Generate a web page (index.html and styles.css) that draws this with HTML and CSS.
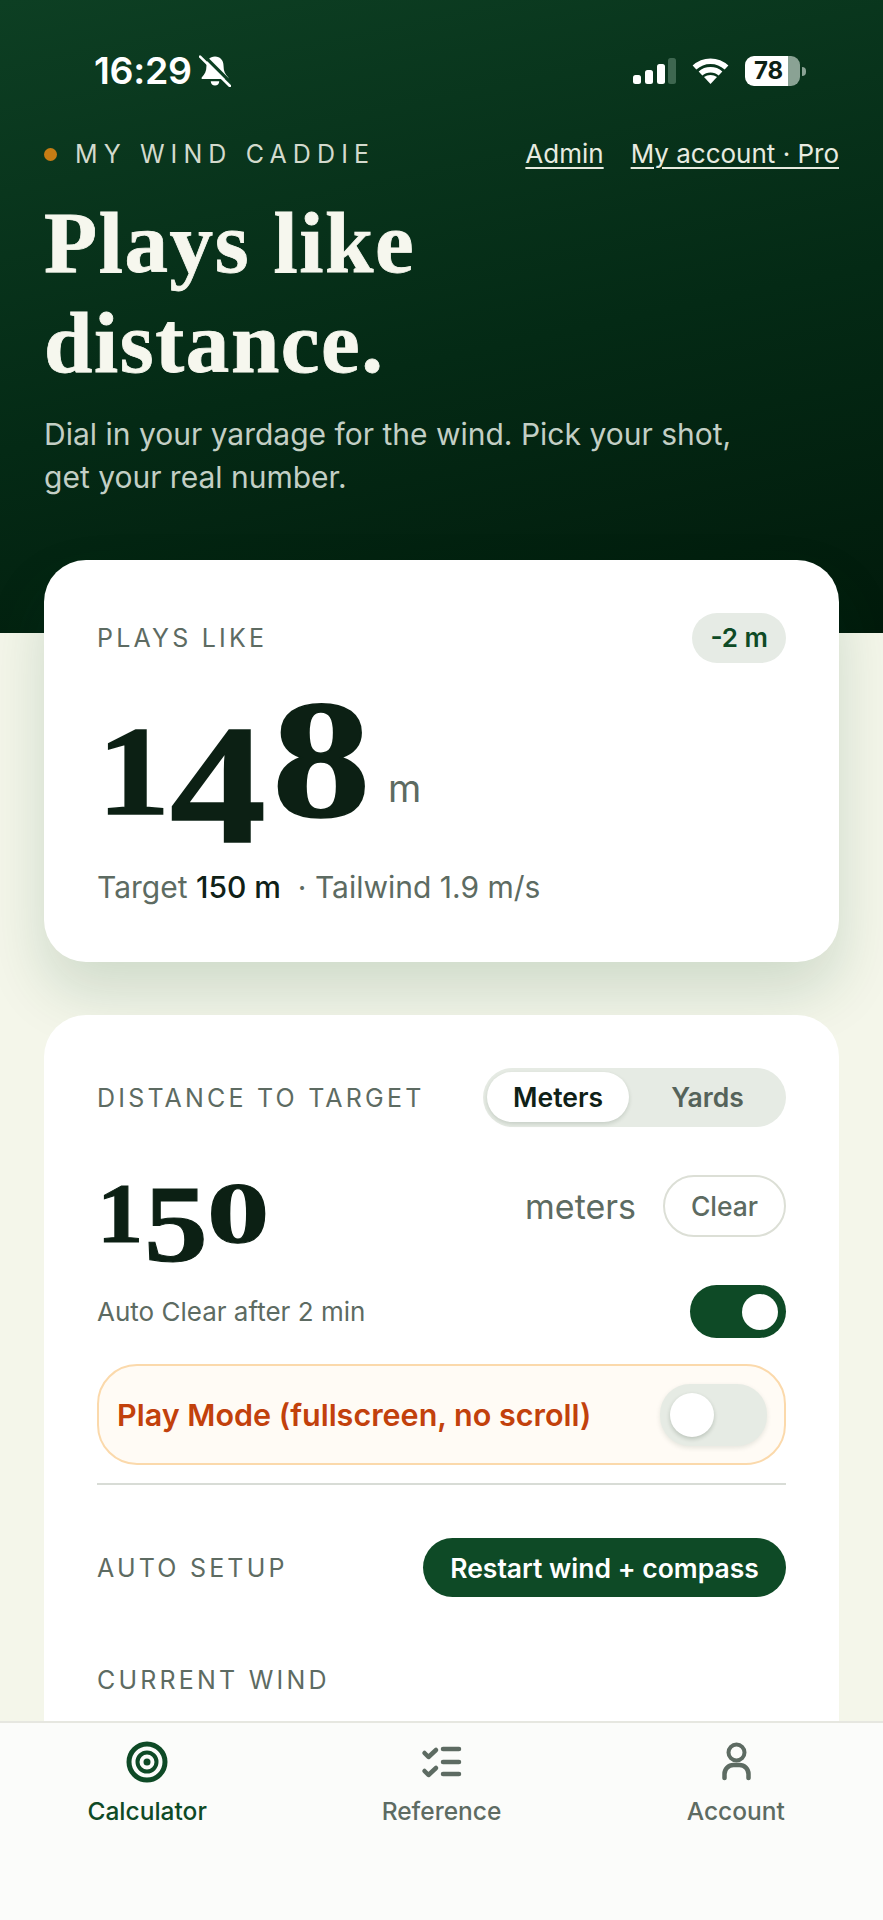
FILE: index.html
```html
<!DOCTYPE html>
<html lang="en">
<head>
<meta charset="utf-8">
<title>My Wind Caddie</title>
<link rel="stylesheet" href="styles.css">
</head>
<body>
<div class="phone">
  <header class="hero">
    <div class="status">
      <div class="status-left">
        <span class="clock">16:29</span>
        <svg class="bell" viewBox="0 0 30 30" width="32" height="32">
          <path class="bell-body" d="M15 1.500c-5 0-8 3.800-8 8.500 0 5-1.500 8-4.500 11v1.500h25V21c-3-3-4.500-6-4.500-11 0-4.700-3-8.500-8-8.500z"/>
          <path class="bell-body" d="M11 24.500h8c0 2.500-1.800 4-4 4s-4-1.500-4-4z"/>
          <path class="bell-cut" d="M3 -1L31 27"/>
          <path class="bell-slash" d="M1 1.500L29 29"/>
        </svg>
      </div>
      <div class="status-right">
        <svg class="signal" viewBox="0 0 43 26" width="43" height="26">
          <rect class="on" x="0" y="17" width="8" height="9" rx="2.500"/>
          <rect class="on" x="12" y="12" width="8" height="14" rx="2.500"/>
          <rect class="on" x="24" y="6" width="8" height="20" rx="2.500"/>
          <rect class="off" x="35" y="0" width="8" height="26" rx="2.500"/>
        </svg>
        <svg class="wifi" viewBox="0 0 36 26" width="37" height="26">
          <path class="wifi-arc" d="M2 9.500C11 1 25 1 34 9.500"/>
          <path class="wifi-arc" d="M8 15.500C13.500 10.500 22.500 10.500 28 15.500"/>
          <path class="wifi-dot" d="M18 26l-6.500-7c3.800-2.800 9.200-2.800 13 0z"/>
        </svg>
        <div class="battery">
          <div class="battery-body"><span class="battery-level">78</span></div>
          <span class="battery-nub"></span>
        </div>
      </div>
    </div>
    <div class="brand-row">
      <div class="brand"><span class="brand-dot"></span><span>MY WIND CADDIE</span></div>
      <nav class="top-links"><a href="#">Admin</a><a href="#">My account · Pro</a></nav>
    </div>
    <h1 class="title">Plays like<br>distance.</h1>
    <p class="lede">Dial in your yardage for the wind. Pick your shot,<br>get your real number.</p>
  </header>

  <main class="content">
    <section class="card card-result">
      <div class="row">
        <span class="label">PLAYS LIKE</span>
        <span class="delta">-2 m</span>
      </div>
      <div class="big-number">
        <span class="fig f-one">1</span><span class="fig f-four">4</span><span class="fig f-eight">8</span><span class="big-unit">m</span>
      </div>
      <p class="summary">Target <strong>150 m</strong>&nbsp; · Tailwind 1.9 m/s</p>
    </section>

    <section class="card card-input">
      <div class="row row-first">
        <span class="label">DISTANCE TO TARGET</span>
        <div class="segment">
          <span class="segment-item is-active">Meters</span>
          <span class="segment-item">Yards</span>
        </div>
      </div>
      <div class="row row-value">
        <div class="input-number"><span class="fig i-one">1</span><span class="fig i-five">5</span><span class="fig i-zero">0</span></div>
        <div class="value-side">
          <span class="unit-word">meters</span>
          <button class="clear-btn">Clear</button>
        </div>
      </div>
      <div class="row row-auto">
        <span class="auto-text">Auto Clear after 2 min</span>
        <span class="switch switch-on"><span class="knob"></span></span>
      </div>
      <div class="play-mode">
        <span class="play-text">Play Mode (fullscreen, no scroll)</span>
        <span class="switch switch-off"><span class="knob"></span></span>
      </div>
      <hr class="rule">
      <div class="row row-setup">
        <span class="label">AUTO SETUP</span>
        <button class="primary-btn">Restart wind + compass</button>
      </div>
      <div class="wind-label"><span class="label">CURRENT WIND</span></div>
    </section>
  </main>

  <nav class="tabbar">
    <a class="tab is-current" href="#">
      <svg class="tab-icon" viewBox="0 0 44 44" width="44" height="44">
        <circle class="ring" cx="22" cy="22" r="18" stroke-width="5"/>
        <circle class="ring" cx="22" cy="22" r="9.500" stroke-width="4"/>
        <circle class="dot" cx="22" cy="22" r="3.500"/>
      </svg>
      <span>Calculator</span>
    </a>
    <a class="tab" href="#">
      <svg class="tab-icon" viewBox="0 0 44 44" width="44" height="44">
        <path class="line" d="M5.500 13l4 4 7.500-7M5.500 31l4 4 7.500-7"/>
        <path class="line" d="M24 9h16M24 22h16M24 34h16"/>
      </svg>
      <span>Reference</span>
    </a>
    <a class="tab" href="#">
      <svg class="tab-icon" viewBox="0 0 44 44" width="44" height="44">
        <circle class="ring" cx="22.500" cy="12.500" r="8" stroke-width="4"/>
        <path class="line" d="M10.500 38v-4a9 9 0 0 1 9-9h6a9 9 0 0 1 9 9v4"/>
      </svg>
      <span>Account</span>
    </a>
  </nav>
</div>
</body>
</html>
```
FILE: styles.css
```css
* { box-sizing: border-box; }
html, body { margin: 0; padding: 0; }
body { font-family: Inter, "Liberation Sans", sans-serif; background: #f4f6ea; color: #0f2117; }
.phone { position: relative; width: 883px; height: 1920px; overflow: hidden; background: #f4f6ea; }

.hero { height: 633px; padding: 0 44px; color: #fff; background: linear-gradient(168deg, #0d3f23 0%, #042a15 55%, #011a0b 100%); }
.status { display: flex; justify-content: space-between; align-items: center; height: 36px; padding: 0 33px 0 50px; transform: translateY(53px); }
.status-left { display: flex; align-items: center; gap: 7px; }
.clock { font-size: 37.500px; font-weight: 600; line-height: 36px; letter-spacing: -0.3px; }
.bell { display: block; }
.bell-body { fill: #fff; }
.bell-cut { stroke: #0c3f22; stroke-width: 3; fill: none; }
.bell-slash { stroke: #fff; stroke-width: 2.500; fill: none; stroke-linecap: round; }
.status-right { display: flex; align-items: center; gap: 16px; }
.signal .on { fill: #fff; }
.signal .off { fill: #3e6750; }
.signal, .wifi { display: block; }
.wifi-arc { fill: none; stroke: #fff; stroke-width: 5.500; }
.wifi-dot { fill: #fff; }
.battery { display: flex; align-items: center; gap: 2px; }
.battery-body { width: 55px; height: 30px; border-radius: 9px; background: linear-gradient(90deg, #fff 0 78%, #8aa294 78% 100%); display: flex; align-items: center; padding-left: 9px; }
.battery-level { font-size: 24px; line-height: 30px; font-weight: 700; color: #0d2216; }
.battery-nub { width: 4px; height: 9px; border-radius: 0 4px 4px 0; background: #8aa294; }

.brand-row { display: flex; justify-content: space-between; align-items: center; padding-top: 102px; line-height: 32px; }
.brand { display: flex; align-items: center; gap: 18px; font-size: 25px; letter-spacing: 6.100px; color: #d3dacd; }
.brand-dot { width: 13px; height: 13px; border-radius: 50%; background: #c77c14; }
.top-links { display: flex; gap: 27px; font-size: 26px; }
.top-links a { color: #e8ebe0; text-decoration: underline; text-underline-offset: 4px; text-decoration-thickness: 1.500px; }

.title { margin: 23px 0 0; font-family: "Liberation Serif", serif; font-weight: 700; font-size: 87px; line-height: 100px; letter-spacing: 1.600px; color: #f6f7ee; -webkit-text-stroke: 0.8px #f6f7ee; }
.lede { margin: 20px 0 0; font-size: 30px; line-height: 43px; color: #c3cfc5; }

.content { margin-top: -73px; padding: 0 44px; display: flex; flex-direction: column; gap: 53px; }
.card { background: #fff; border-radius: 42px; padding: 0 53px; }
.card-result { height: 402px; padding-top: 53px; box-shadow: 0 30px 60px rgba(14, 74, 38, 0.16); }
.row { display: flex; justify-content: space-between; align-items: center; }
.label { font-size: 25px; letter-spacing: 3.200px; color: #5d6b62; }
.delta { height: 50px; padding: 0 18px; border-radius: 25px; background: #e6ebe5; color: #0e4a26; font-size: 26px; font-weight: 600; line-height: 50px; }

.fig { display: inline-block; font-family: "Liberation Serif", serif; font-weight: 700; color: #0c2014; line-height: 1; transform-origin: left bottom; -webkit-text-stroke: 1.500px #0c2014; }
.big-number { height: 190px; padding-top: 11px; white-space: nowrap; line-height: 190px; }
.f-one { font-size: 127px; width: 73px; transform: scaleX(1.15); }
.f-four { font-size: 170px; width: 102px; vertical-align: -28px; transform: scaleX(1.13); }
.f-eight { font-size: 170px; width: 116px; vertical-align: -2px; transform: scaleX(1.16); }
.big-unit { font-size: 38px; color: #5d6b62; vertical-align: 12px; }
.summary { margin: 14px 0 0; font-size: 30px; line-height: 40px; color: #5d6b62; }
.summary strong { font-weight: 500; color: #0f2117; }

.row-first { padding-top: 53px; }
.segment { display: flex; width: 303px; height: 59px; padding: 4px 0 4px 4px; border-radius: 30px; background: #e6ebe4; }
.segment-item { flex: 1; text-align: center; font-size: 26.500px; font-weight: 600; line-height: 50px; color: #55635a; }
.segment-item.is-active { flex: 0 0 142px; height: 50px; border-radius: 25px; background: #fff; color: #0f2117; box-shadow: 0 2px 4px rgba(14, 40, 20, 0.15); }

.row-value { margin-top: 48px; height: 62px; }
.input-number { white-space: nowrap; line-height: 62px; padding-top: 34px; }
.i-one { font-size: 84px; width: 47px; transform: scaleX(1.1); }
.i-five { font-size: 111px; width: 63px; vertical-align: -19px; transform: scaleX(1.15); }
.i-zero { font-size: 86px; width: 62px; transform: scaleX(1.45); }
.fig.i-one, .fig.i-five, .fig.i-zero { -webkit-text-stroke: 1px #0c2014; }
.value-side { display: flex; align-items: center; gap: 27px; }
.unit-word { font-size: 34px; color: #5d6b62; }
.clear-btn { width: 123px; height: 62px; border: 2px solid #dcdfd6; border-radius: 31px; background: #fff; font: 500 26.500px Inter, sans-serif; color: #5d6b62; padding: 0; }

.row-auto { margin-top: 48px; }
.auto-text { font-size: 26px; color: #5d6b62; }
.switch { display: flex; align-items: center; border-radius: 30px; }
.switch-on { width: 96px; height: 53px; padding-left: 52px; background: #0e4a26; }
.switch-on .knob { width: 36px; height: 36px; border-radius: 50%; background: #fff; }
.switch-off { width: 107px; height: 62px; padding-left: 10px; background: #e6ebe4; box-shadow: 0 2px 5px rgba(14, 40, 20, 0.1); }
.switch-off .knob { width: 44px; height: 44px; border-radius: 50%; background: #fff; box-shadow: 0 2px 4px rgba(14, 40, 20, 0.2); }

.play-mode { display: flex; justify-content: space-between; align-items: center; height: 101px; margin-top: 26px; padding: 0 17px 0 18px; border: 2px solid #fbd9ab; border-radius: 40px; background: #fffbf5; }
.play-text { font-size: 30.500px; font-weight: 600; color: #c2410c; }
.rule { height: 2px; margin: 18px 0 0; border: 0; background: #d8dcd6; }

.row-setup { margin-top: 53px; }
.primary-btn { width: 363px; height: 59px; border: 0; border-radius: 30px; background: #0e4a26; color: #fff; font: 600 26.500px Inter, sans-serif; padding: 0; }
.wind-label { margin-top: 68px; padding-bottom: 140px; line-height: 30px; }

.tabbar { position: absolute; left: 0; right: 0; top: 1721px; bottom: 0; display: grid; grid-template-columns: repeat(3, 1fr); align-items: start; padding-top: 17px; border-top: 2px solid #e6e7e0; background: #fbfcfa; }
.tab { display: flex; flex-direction: column; align-items: center; gap: 12px; font-size: 24.500px; font-weight: 500; color: #5d6b62; text-decoration: none; line-height: 30px; }
.tab.is-current { color: #0e4a26; }
.tab-icon { display: block; }
.ring { fill: none; stroke: currentColor; }
.dot { fill: currentColor; }
.line { fill: none; stroke: currentColor; stroke-width: 4.500; stroke-linecap: round; stroke-linejoin: round; }
```
